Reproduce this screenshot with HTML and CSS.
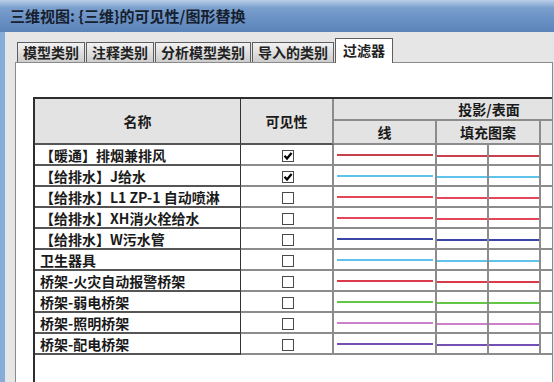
FILE: index.html
```html
<!DOCTYPE html>
<html lang="zh-CN">
<head>
    <meta charset="UTF-8">
    <meta name="viewport" content="width=device-width, initial-scale=1.0">
    <title>可见性/图形替换</title>
    <link rel="stylesheet" href="styles.css">
</head>
<body>
    <div class="window">
        <div class="title">三维视图: {三维}的可见性/图形替换</div>
        <div class="content">
            <div class="tabs">
                <div class="tab">模型类别</div>
                <div class="tab">注释类别</div>
                <div class="tab">分析模型类别</div>
                <div class="tab">导入的类别</div>
                <div class="tab active">过滤器</div>
            </div>
            <div class="panel">
                <div class="grid">
                    <table>
                        <colgroup>
                            <col class="col-name">
                            <col class="col-vis">
                            <col class="col-line">
                            <col class="col-fill">
                            <col class="col-fill">
                            <col class="col-alpha">
                            <col class="col-line">
                            <col class="col-cut">
                        </colgroup>
                        <thead>
                            <tr class="head-top">
                                <th rowspan="2" class="name-head">名称</th>
                                <th rowspan="2" class="vis-head">可见性</th>
                                <th colspan="4">投影/表面</th>
                                <th colspan="2">截面</th>
                            </tr>
                            <tr class="head-sub">
                                <th>线</th>
                                <th colspan="2">填充图案</th>
                                <th>透明度</th>
                                <th>线</th>
                                <th>填充图案</th>
                            </tr>
                        </thead>
                        <tbody>
                            <tr class="c-smoke">
                                <td class="name">【暖通】排烟兼排风</td>
                                <td class="vis"><svg class="box" viewBox="0 0 12 12"><rect x="0.5" y="0.5" width="11" height="11"/><path d="M2.5 5.8 L5 8.5 L9.6 3"/></svg></td>
                                <td class="line"><span class="stroke"></span></td>
                                <td class="fill"><span class="stroke"></span></td>
                                <td class="fill"><span class="stroke"></span></td>
                                <td></td><td></td><td></td>
                            </tr>
                            <tr class="c-sky">
                                <td class="name">【给排水】J给水</td>
                                <td class="vis"><svg class="box" viewBox="0 0 12 12"><rect x="0.5" y="0.5" width="11" height="11"/><path d="M2.5 5.8 L5 8.5 L9.6 3"/></svg></td>
                                <td class="line"><span class="stroke"></span></td>
                                <td class="fill"><span class="stroke"></span></td>
                                <td class="fill"><span class="stroke"></span></td>
                                <td></td><td></td><td></td>
                            </tr>
                            <tr class="c-red">
                                <td class="name">【给排水】L1 ZP-1 自动喷淋</td>
                                <td class="vis"><svg class="box" viewBox="0 0 12 12"><rect x="0.5" y="0.5" width="11" height="11"/></svg></td>
                                <td class="line"><span class="stroke"></span></td>
                                <td class="fill"><span class="stroke"></span></td>
                                <td class="fill"><span class="stroke"></span></td>
                                <td></td><td></td><td></td>
                            </tr>
                            <tr class="c-red">
                                <td class="name">【给排水】XH消火栓给水</td>
                                <td class="vis"><svg class="box" viewBox="0 0 12 12"><rect x="0.5" y="0.5" width="11" height="11"/></svg></td>
                                <td class="line"><span class="stroke"></span></td>
                                <td class="fill"><span class="stroke"></span></td>
                                <td class="fill"><span class="stroke"></span></td>
                                <td></td><td></td><td></td>
                            </tr>
                            <tr class="c-navy">
                                <td class="name">【给排水】W污水管</td>
                                <td class="vis"><svg class="box" viewBox="0 0 12 12"><rect x="0.5" y="0.5" width="11" height="11"/></svg></td>
                                <td class="line"><span class="stroke"></span></td>
                                <td class="fill"><span class="stroke"></span></td>
                                <td class="fill"><span class="stroke"></span></td>
                                <td></td><td></td><td></td>
                            </tr>
                            <tr class="c-sky">
                                <td class="name">卫生器具</td>
                                <td class="vis"><svg class="box" viewBox="0 0 12 12"><rect x="0.5" y="0.5" width="11" height="11"/></svg></td>
                                <td class="line"><span class="stroke"></span></td>
                                <td class="fill"><span class="stroke"></span></td>
                                <td class="fill"><span class="stroke"></span></td>
                                <td></td><td></td><td></td>
                            </tr>
                            <tr class="c-alarm">
                                <td class="name">桥架-火灾自动报警桥架</td>
                                <td class="vis"><svg class="box" viewBox="0 0 12 12"><rect x="0.5" y="0.5" width="11" height="11"/></svg></td>
                                <td class="line"><span class="stroke"></span></td>
                                <td class="fill"><span class="stroke"></span></td>
                                <td class="fill"><span class="stroke"></span></td>
                                <td></td><td></td><td></td>
                            </tr>
                            <tr class="c-green">
                                <td class="name">桥架-弱电桥架</td>
                                <td class="vis"><svg class="box" viewBox="0 0 12 12"><rect x="0.5" y="0.5" width="11" height="11"/></svg></td>
                                <td class="line"><span class="stroke"></span></td>
                                <td class="fill"><span class="stroke"></span></td>
                                <td class="fill"><span class="stroke"></span></td>
                                <td></td><td></td><td></td>
                            </tr>
                            <tr class="c-pink">
                                <td class="name">桥架-照明桥架</td>
                                <td class="vis"><svg class="box" viewBox="0 0 12 12"><rect x="0.5" y="0.5" width="11" height="11"/></svg></td>
                                <td class="line"><span class="stroke"></span></td>
                                <td class="fill"><span class="stroke"></span></td>
                                <td class="fill"><span class="stroke"></span></td>
                                <td></td><td></td><td></td>
                            </tr>
                            <tr class="c-purple">
                                <td class="name">桥架-配电桥架</td>
                                <td class="vis"><svg class="box" viewBox="0 0 12 12"><rect x="0.5" y="0.5" width="11" height="11"/></svg></td>
                                <td class="line"><span class="stroke"></span></td>
                                <td class="fill"><span class="stroke"></span></td>
                                <td class="fill"><span class="stroke"></span></td>
                                <td></td><td></td><td></td>
                            </tr>
                        </tbody>
                    </table>
                </div>
            </div>
        </div>
    </div>
</body>
</html>
```

FILE: styles.css
```css
html, body {
    margin: 0;
    height: 100%;
    overflow: hidden;
}

body {
    font-family: "Noto Sans CJK SC", "Noto Sans", sans-serif;
    color: #1e1e1e;
    background-color: #e6e6e6;
}

.window {
    display: flex;
    flex-direction: column;
    height: 100%;
}

.title {
    height: 32px;
    flex: none;
    box-sizing: border-box;
    padding-left: 10px;
    font-size: 15px;
    line-height: 32px;
    font-weight: bold;
    color: #16202e;
    background: linear-gradient(#b9cfe8 0%, #7a9fcd 25%, #6a91c4 60%, #5b84ba 100%);
    white-space: nowrap;
}

.content {
    flex: 1;
    display: flex;
    flex-direction: column;
    min-height: 0;
    border-left: 5px solid #86acd9;
    padding: 0 1px 0 10px;
    background-color: #e6e6e6;
}

/* tab strip */
.tabs {
    display: flex;
    align-items: flex-end;
    gap: 1px;
    padding: 6px 0 0 2px;
    position: relative;
    z-index: 1;
}

.tab {
    height: 20px;
    box-sizing: border-box;
    padding: 0 5px;
    border: 1px solid #5e5e5e;
    border-bottom: none;
    background: linear-gradient(#f2f2f2, #cdcdcd);
    font-size: 14px;
    line-height: 19px;
    font-weight: bold;
    color: #222;
    white-space: nowrap;
}

.tab.active {
    height: 25px;
    margin-bottom: -1px;
    padding: 0 7px;
    background: #fff;
    line-height: 22px;
}

.panel {
    flex: 1;
    min-height: 0;
    overflow: hidden;
    background-color: #fff;
    border: 1px solid #8a8a8a;
    border-bottom: none;
}

.grid {
    height: 100%;
    margin: 34px 0 0 17px;
    border-left: 2px solid #2e2e2e;
    border-top: 2px solid #2e2e2e;
    overflow: hidden;
}

table {
    width: 818px;
    table-layout: fixed;
    border-collapse: separate;
    border-spacing: 0;
    font-size: 14px;
    font-weight: bold;
}

.col-name { width: 206px; }
.col-vis { width: 93px; }
.col-line { width: 103px; }
.col-fill { width: 52px; }
.col-alpha { width: 105px; }
.col-cut { width: 104px; }

th {
    background-color: #e3e3e3;
    border-right: 2px solid #8c8c8c;
    border-bottom: 2px solid #8c8c8c;
    text-align: center;
    padding: 0;
    color: #1a1a1a;
    white-space: nowrap;
    line-height: 18px;
}

.head-top th { height: 20px; }
.head-sub th { height: 22px; }

th.name-head,
th.vis-head {
    border-bottom-color: #555;
}

th.name-head {
    border-right: 1px solid #333;
}

td {
    height: 21px;
    box-sizing: border-box;
    padding: 0;
    border-right: 2px solid #8c8c8c;
    border-bottom: 2px solid #8c8c8c;
}

td.name {
    padding-left: 5px;
    border-right: 1px solid #333;
    border-bottom-color: #555;
    white-space: nowrap;
    line-height: 18px;
    color: #1a1a1a;
}

td.vis {
    text-align: center;
    line-height: 0;
}

.box {
    width: 12px;
    height: 12px;
    margin-top: 2px;
    margin-left: 2px;
}

.box rect {
    fill: #fff;
    stroke: #4a4a4a;
}

.box path {
    fill: none;
    stroke: #000;
    stroke-width: 2.2;
}

.stroke {
    display: block;
    height: 2px;
    margin: 1px 2px 0 3px;
}

td.fill .stroke {
    margin: 2px 0 0 0;
}

.c-smoke .stroke { background-color: #c8404e; }
.c-sky .stroke { background-color: #5ec2ea; }
.c-red .stroke { background-color: #e6465a; }
.c-navy .stroke { background-color: #3a46a6; }
.c-alarm .stroke { background-color: #dc3a4a; }
.c-green .stroke { background-color: #64c646; }
.c-pink .stroke { background-color: #cc80cc; }
.c-purple .stroke { background-color: #7450b4; }
```
